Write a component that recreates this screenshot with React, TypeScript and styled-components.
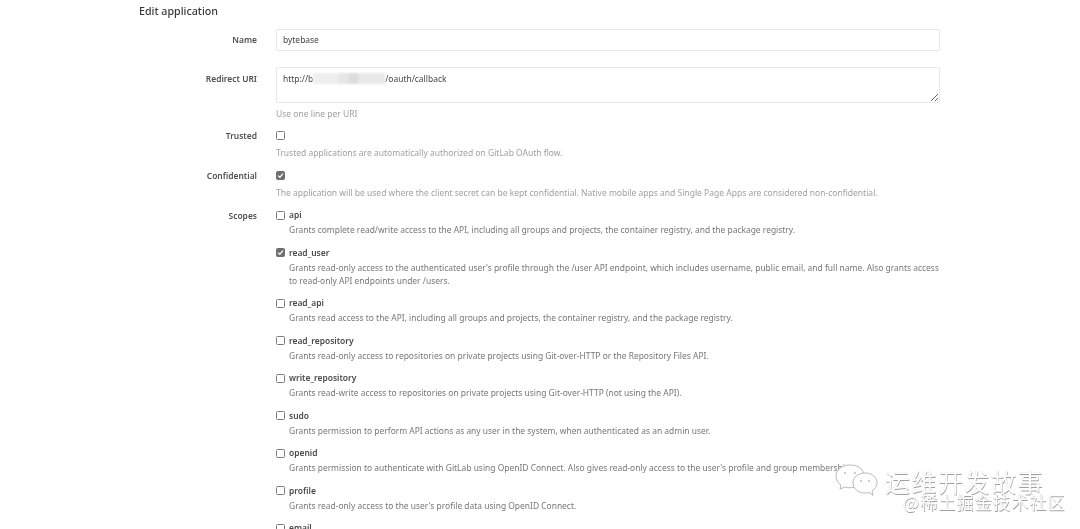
import * as React from 'react'
import styled, { createGlobalStyle } from 'styled-components'

const GlobalStyle = createGlobalStyle`
  html, body {
    margin: 0;
    padding: 0;
    height: 529px;
    overflow: hidden;
    background: #fff;
  }
  body {
    font-family: 'Noto Sans', 'Open Sans', sans-serif;
    font-size: 8.45px;
    color: #4a4a4a;
  }
`

const Page = styled.div`
  position: relative;
  width: 1080px;
  height: 529px;
  overflow: hidden;
  padding: 5px 140px 0 139px;
  box-sizing: border-box;
  filter: blur(0.3px);
`

const Title = styled.h3`
  margin: 0 0 11px;
  font-size: 10.7px;
  line-height: 13px;
  font-weight: 500;
  color: #3a3a3a;
`

const Row = styled.div<{ $gap: number }>`
  display: grid;
  grid-template-columns: 118px 1fr;
  column-gap: 19px;
  margin-bottom: ${p => p.$gap}px;
`

const Label = styled.div<{ $top: number }>`
  text-align: right;
  font-weight: 600;
  line-height: 12px;
  color: #505050;
  padding-top: ${p => p.$top}px;
`

const TextInput = styled.div`
  height: 22px;
  line-height: 20px;
  padding: 0 6px;
  box-sizing: border-box;
  border: 1px solid #e8e8e8;
  border-radius: 2px;
  color: #444;
`

const TextArea = styled(TextInput)`
  height: 36px;
  line-height: 22px;
  resize: vertical;
  overflow: auto;
`

const Redacted = styled.span`
  display: inline-block;
  width: 72px;
  height: 11px;
  vertical-align: -2px;
  background: linear-gradient(90deg, #efefef 0 35%, #e6e6e6 35% 50%, #dcdcdc 50% 62%, #e8e8e8 62% 100%);
  filter: blur(1px);
`

const Hint = styled.div<{ $top: number }>`
  margin-top: ${p => p.$top}px;
  font-size: 8.5px;
  line-height: 12px;
  color: #a0a0a0;
`

const CheckBox = styled.span<{ $on?: boolean }>`
  flex: none;
  width: 9px;
  height: 9px;
  box-sizing: border-box;
  border: 1px solid ${p => (p.$on ? '#6f6f6f' : '#7c7c7c')};
  border-radius: 1.5px;
  background: ${p => (p.$on ? '#6f6f6f' : '#fff')};
  display: flex;
  align-items: center;
  justify-content: center;
`

const Check = ({ on }: { on?: boolean }) => (
  <CheckBox $on={on}>
    {on && (
      <svg width='7' height='7' viewBox='0 0 8 8'>
        <path d='M1.2 4.2 3.2 6.2 6.8 1.8' fill='none' stroke='#fff' strokeWidth='1.4' />
      </svg>
    )}
  </CheckBox>
)

const CheckLine = styled.div`
  display: flex;
  align-items: center;
  height: 12px;
`

const ScopeList = styled.div`
  display: flex;
  flex-direction: column;
`

const Scope = styled.div`
  display: grid;
  grid-template-columns: 11px 1fr;
  column-gap: 2px;
  margin-bottom: 10.5px;
`

const ScopeName = styled.div`
  font-weight: 600;
  line-height: 12px;
  color: #4a4a4a;
`

const ScopeText = styled.div`
  grid-column: 2;
  margin-top: 2px;
  line-height: 13px;
  color: #777;
`

const Watermark = styled.div`
  position: absolute;
  left: 835px;
  top: 464px;
  width: 245px;
  height: 65px;
`

const WeChat = styled.svg`
  position: absolute;
  left: 0;
  top: 0;
`

const WaterText = styled.div<{ $left: number; $top: number; $size: number; $space: number }>`
  position: absolute;
  left: ${p => p.$left}px;
  top: ${p => p.$top}px;
  font-family: 'Noto Sans CJK SC', sans-serif;
  font-size: ${p => p.$size}px;
  line-height: 1;
  letter-spacing: ${p => p.$space}px;
  white-space: nowrap;
  color: #fff;
  text-shadow: 0.6px 0.6px 0.6px #a0a0a0, -0.3px -0.3px 0.4px #d0d0d0;
`

const scopes = [
  { name: 'api', text: 'Grants complete read/write access to the API, including all groups and projects, the container registry, and the package registry.' },
  { name: 'read_user', on: true, text: "Grants read-only access to the authenticated user's profile through the /user API endpoint, which includes username, public email, and full name. Also grants access to read-only API endpoints under /users." },
  { name: 'read_api', text: 'Grants read access to the API, including all groups and projects, the container registry, and the package registry.' },
  { name: 'read_repository', text: 'Grants read-only access to repositories on private projects using Git-over-HTTP or the Repository Files API.' },
  { name: 'write_repository', text: 'Grants read-write access to repositories on private projects using Git-over-HTTP (not using the API).' },
  { name: 'sudo', text: 'Grants permission to perform API actions as any user in the system, when authenticated as an admin user.' },
  { name: 'openid', text: "Grants permission to authenticate with GitLab using OpenID Connect. Also gives read-only access to the user's profile and group memberships." },
  { name: 'profile', text: "Grants read-only access to the user's profile data using OpenID Connect." },
  { name: 'email', text: "Grants read-only access to the user's primary email address using OpenID Connect." }
]

export default function App() {
  return (
    <Page>
      <GlobalStyle />
      <Title>Edit application</Title>
      <Row $gap={16}>
        <Label $top={5}>Name</Label>
        <TextInput>bytebase</TextInput>
      </Row>
      <Row $gap={9}>
        <Label $top={6}>Redirect URI</Label>
        <div>
          <TextArea>
            http://b<Redacted />/oauth/callback
          </TextArea>
          <Hint $top={5}>Use one line per URI</Hint>
        </div>
      </Row>
      <Row $gap={10}>
        <Label $top={1}>Trusted</Label>
        <div>
          <CheckLine><Check /></CheckLine>
          <Hint $top={6}>Trusted applications are automatically authorized on GitLab OAuth flow.</Hint>
        </div>
      </Row>
      <Row $gap={10}>
        <Label $top={1}>Confidential</Label>
        <div>
          <CheckLine><Check on /></CheckLine>
          <Hint $top={6}>The application will be used where the client secret can be kept confidential. Native mobile apps and Single Page Apps are considered non-confidential.</Hint>
        </div>
      </Row>
      <Row $gap={0}>
        <Label $top={1}>Scopes</Label>
        <ScopeList>
          {scopes.map(s => (
            <Scope key={s.name}>
              <CheckLine><Check on={s.on} /></CheckLine>
              <ScopeName>{s.name}</ScopeName>
              <ScopeText>{s.text}</ScopeText>
            </Scope>
          ))}
        </ScopeList>
      </Row>
      <Watermark>
        <WeChat width='44' height='34' viewBox='0 0 44 34' fill='#fff' stroke='#a8a8a8' strokeWidth='0.8'>
          <path d='M15 1C7 1 1 6 1 12c0 4 2 7 5 9l-1 4 5-2c2 .6 3 .8 5 .8 8 0 14-5 14-11.8S23 1 15 1z' />
          <path d='M30 9c-7 0-12 4.400-12 10s5 10 12 10c1.500 0 3-.2 4-.6l4 3-1-4.400c3-2 5-4.800 5-8 0-5.600-5-10-12-10z' />
          <circle cx='10' cy='9' r='.6' /><circle cx='20' cy='9' r='.6' />
          <circle cx='26' cy='17' r='.6' /><circle cx='34' cy='17' r='.6' />
        </WeChat>
        <WaterText $left={50} $top={5} $size={25} $space={1.500}>运维开发故事</WaterText>
        <WaterText $left={68} $top={29} $size={17} $space={1.200}>@稀土掘金技术社区</WaterText>
      </Watermark>
    </Page>
  )
}
